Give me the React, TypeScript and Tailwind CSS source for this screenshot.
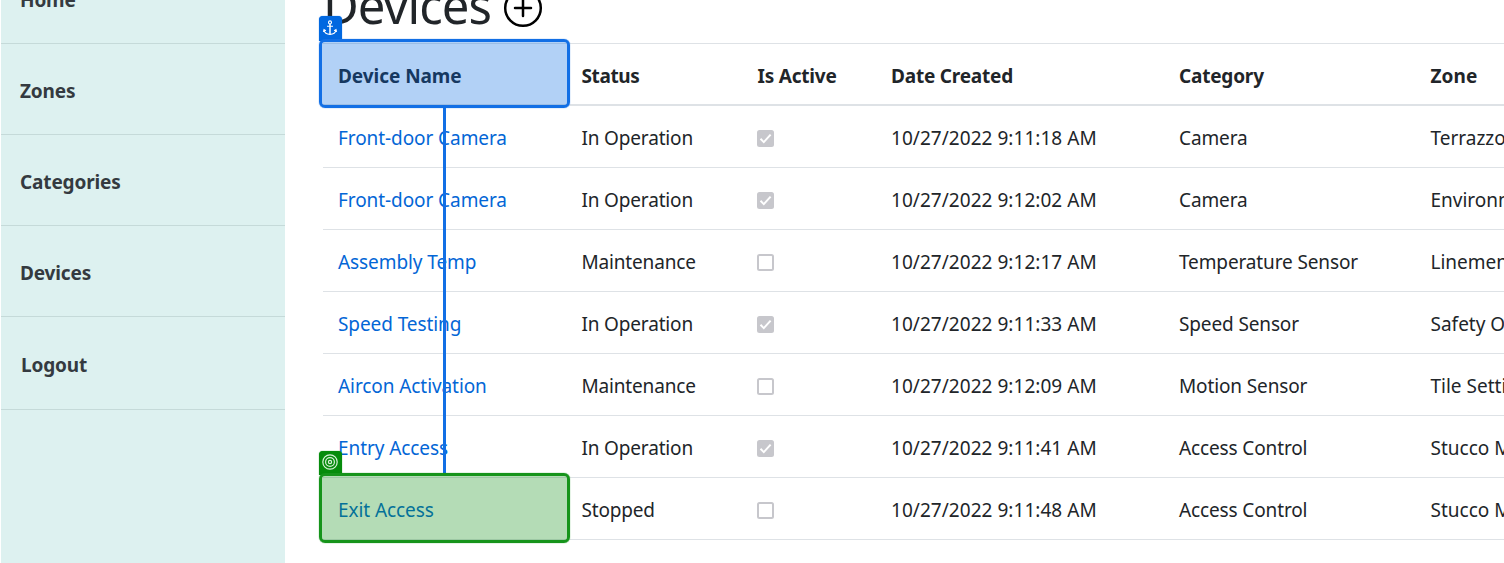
import React from "react";

type Device = {
  name: string;
  status: string;
  active: boolean;
  created: string;
  category: string;
  zone: string;
};

const devices: Device[] = [
  { name: "Front-door Camera", status: "In Operation", active: true, created: "10/27/2022 9:11:18 AM", category: "Camera", zone: "Terrazzo" },
  { name: "Front-door Camera", status: "In Operation", active: true, created: "10/27/2022 9:12:02 AM", category: "Camera", zone: "Environment" },
  { name: "Assembly Temp", status: "Maintenance", active: false, created: "10/27/2022 9:12:17 AM", category: "Temperature Sensor", zone: "Linemen" },
  { name: "Speed Testing", status: "In Operation", active: true, created: "10/27/2022 9:11:33 AM", category: "Speed Sensor", zone: "Safety Office" },
  { name: "Aircon Activation", status: "Maintenance", active: false, created: "10/27/2022 9:12:09 AM", category: "Motion Sensor", zone: "Tile Setting" },
  { name: "Entry Access", status: "In Operation", active: true, created: "10/27/2022 9:11:41 AM", category: "Access Control", zone: "Stucco Masons" },
  { name: "Exit Access", status: "Stopped", active: false, created: "10/27/2022 9:11:48 AM", category: "Access Control", zone: "Stucco Masons" },
];

const columns = "grid grid-cols-[243.5px_176px_133.5px_288px_251.5px_200px] items-center pl-[15px]";

function Checkbox({ checked }: { checked: boolean }) {
  return (
    <svg width="17" height="17" viewBox="0 0 17 17" className="-ml-[0.5px] block">
      {checked ? (
        <>
          <rect width="17" height="17" rx="2.5" fill="#c7c7cc" />
          <path d="M3.5 8.8 6.8 12.1 13.6 4.6" fill="none" stroke="#fff" strokeWidth="2" />
        </>
      ) : (
        <rect x="1" y="1" width="15" height="15" rx="1.5" fill="#fff" stroke="#c7c7cc" strokeWidth="2" />
      )}
    </svg>
  );
}

function AnchorGlyph() {
  return (
    <svg width="16" height="16" viewBox="0 0 16 16" fill="none" stroke="#fff" strokeWidth="1.1" className="-ml-px">
      <circle cx="8" cy="2.4" r="1.5" />
      <path d="M8 4v10.500" strokeWidth="1.500" />
      <path d="M5 6.200h6M2 10.200c.5 2.600 3 4.200 6 4.200s5.500-1.600 6-4.200M1.400 11.800l.6-2.200 1.900 1.200M14.600 11.800l-.6-2.200-1.900 1.200" />
    </svg>
  );
}

function TargetGlyph() {
  return (
    <svg width="16" height="16" viewBox="0 0 16 16" fill="none" stroke="#d9f0da" strokeWidth="1.2" className="-ml-px">
      <circle cx="8" cy="8" r="7.200" />
      <circle cx="8" cy="8" r="4.400" />
      <circle cx="8" cy="8" r="1.600" />
    </svg>
  );
}

function NavItem({ label, className }: { label: string; className: string }) {
  return (
    <div className={`flex shrink-0 items-center border-b border-[#c5dad9] pt-[4px] ${className}`}>
      <span>{label}</span>
    </div>
  );
}

export default function App() {
  return (
    <div className="relative flex h-[563px] w-[1504px] overflow-hidden bg-white pl-px font-['Noto_Sans',sans-serif] text-[19px] leading-[30px] whitespace-nowrap text-[#212529]">
      <nav className="flex w-[284px] shrink-0 flex-col bg-[#ddf1f0] font-bold tracking-[-0.15px] text-[#343a40]">
        <div className="-mt-[47px] flex flex-col">
          <NavItem label="Home" className="h-[91px] pl-[19px]" />
          <NavItem label="Zones" className="h-[91px] pl-[19px]" />
          <NavItem label="Categories" className="h-[91px] pl-[19px]" />
          <NavItem label="Devices" className="h-[91px] pl-[19px]" />
          <NavItem label="Logout" className="h-[93px] pl-[20px]" />
        </div>
      </nav>

      <main className="flex min-w-0 flex-1 flex-col overflow-hidden pl-[38px]">
        <div className="flex h-[43px] shrink-0 items-start">
          <h1 className="-mt-[25px] text-[49px] leading-[60px] tracking-[-0.95px]">Devices</h1>
          <svg width="40" height="40" viewBox="0 0 40 40" className="-mt-[12px] ml-3 shrink-0" fill="none" stroke="#000">
            <circle cx="20" cy="20" r="17.800" strokeWidth="2.500" />
            <path d="M20 12v16M12 20h16" strokeWidth="2.500" strokeLinecap="round" />
          </svg>
        </div>

        <div className={`${columns} h-[63px] shrink-0 border-t border-b-2 border-t-[#dee2e6] border-b-[#dee2e6] pt-1 font-bold tracking-[-0.2px]`}>
          <span className="tracking-[-0.05px]">Device Name</span>
          <span className="tracking-[-0.4px]">Status</span>
          <span>Is Active</span>
          <span>Date Created</span>
          <span>Category</span>
          <span className="tracking-[0.1px]">Zone</span>
        </div>

        {devices.map((d, i) => (
          <div key={i} className={`${columns} h-[62px] shrink-0 border-b border-[#dee2e6] pt-[3px]`}>
            <span className="tracking-[-0.08px] text-[#0366d6]">{d.name}</span>
            <span className="tracking-[-0.17px]">{d.status}</span>
            <Checkbox checked={d.active} />
            <span className="tracking-[0.04px]">{d.created}</span>
            <span className="tracking-[-0.13px]">{d.category}</span>
            <span>{d.zone}</span>
          </div>
        ))}
      </main>

      <div className="absolute top-[107px] left-[443px] h-[367px] w-[3px] bg-[#126fe5]" />

      <div className="absolute top-[16px] left-[319px] flex h-[25px] w-[23px] justify-center rounded-t-[4px] bg-[#0168e0] pt-[4px] shadow-[0_0_1px_#0168e0]">
        <AnchorGlyph />
      </div>
      <div className="absolute top-[39px] left-[319px] h-[69px] w-[251px] rounded-[6px] border-[3px] border-[#126fe5] bg-[#0168e0]/30 bg-clip-padding shadow-[0_0_1px_#0168e0]" />

      <div className="absolute top-[451px] left-[319px] flex h-[24px] w-[23px] justify-center rounded-t-[4px] bg-[#068c0c] pt-[3px] shadow-[0_0_1px_#068c0c]">
        <TargetGlyph />
      </div>
      <div className="absolute top-[473px] left-[319px] h-[70px] w-[251px] rounded-[6px] border-[3px] border-[#16941b] bg-[#068c0c]/30 bg-clip-padding shadow-[0_0_1px_#068c0c]" />
    </div>
  );
}
